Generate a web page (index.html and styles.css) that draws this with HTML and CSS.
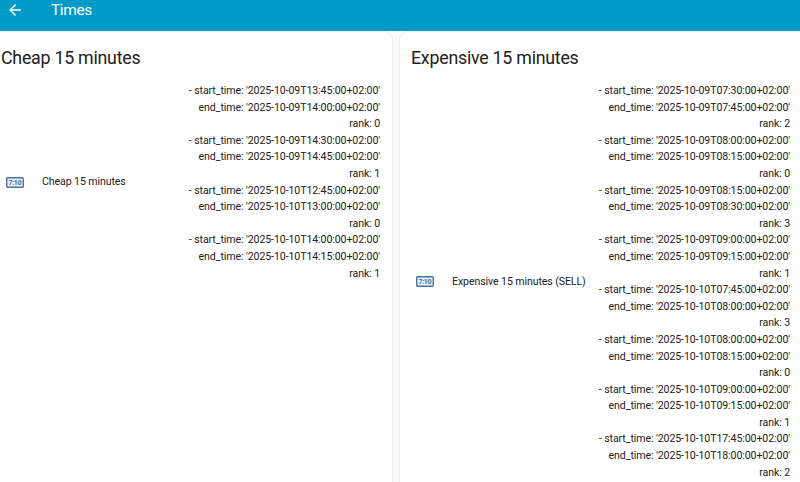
FILE: index.html
```html
<!DOCTYPE html>
<html lang="en">
<head>
  <meta charset="UTF-8" />
  <meta name="viewport" content="width=device-width, initial-scale=1.0" />
  <title>Times</title>
  <link rel="stylesheet" href="styles.css">
</head>
<body>
  <header>
    <svg class="back" viewBox="0 0 24 24"><path d="M20,11.1V12.9H7.8L13.4,18.5L12.08,19.92L4.16,12L12.08,4.08L13.4,5.5L7.8,11.1H20Z" /></svg>
    <h1>Times</h1>
  </header>
  <main>
    <section class="card">
      <h2>Cheap 15 minutes</h2>
      <div class="row">
        <svg class="counter" viewBox="0 0 18 11">
          <rect x="0.75" y="0.75" width="16.5" height="9.5" rx="1" />
          <text x="9" y="8.1" textLength="13">7:10</text>
        </svg>
        <div class="name">Cheap 15 minutes</div>
        <ul class="times" id="cheap"></ul>
      </div>
    </section>

    <section class="card">
      <h2>Expensive 15 minutes</h2>
      <div class="row">
        <svg class="counter" viewBox="0 0 18 11">
          <rect x="0.75" y="0.75" width="16.5" height="9.5" rx="1" />
          <text x="9" y="8.1" textLength="13">7:10</text>
        </svg>
        <div class="name">Expensive 15 minutes (SELL)</div>
        <ul class="times" id="expensive"></ul>
      </div>
    </section>
  </main>

  <script>
    const times = {
      cheap: [
        { start: '2025-10-09T13:45', end: '2025-10-09T14:00', rank: 0 },
        { start: '2025-10-09T14:30', end: '2025-10-09T14:45', rank: 1 },
        { start: '2025-10-10T12:45', end: '2025-10-10T13:00', rank: 0 },
        { start: '2025-10-10T14:00', end: '2025-10-10T14:15', rank: 1 }
      ],
      expensive: [
        { start: '2025-10-09T07:30', end: '2025-10-09T07:45', rank: 2 },
        { start: '2025-10-09T08:00', end: '2025-10-09T08:15', rank: 0 },
        { start: '2025-10-09T08:15', end: '2025-10-09T08:30', rank: 3 },
        { start: '2025-10-09T09:00', end: '2025-10-09T09:15', rank: 1 },
        { start: '2025-10-10T07:45', end: '2025-10-10T08:00', rank: 3 },
        { start: '2025-10-10T08:00', end: '2025-10-10T08:15', rank: 0 },
        { start: '2025-10-10T09:00', end: '2025-10-10T09:15', rank: 1 },
        { start: '2025-10-10T17:45', end: '2025-10-10T18:00', rank: 2 }
      ]
    };

    for (const id in times) {
      const list = document.getElementById(id);
      for (const t of times[id]) {
        const li = document.createElement('li');
        li.innerHTML = `
          <div>- start_time: '${t.start}:00+02:00'</div>
          <div>end_time: '${t.end}:00+02:00'</div>
          <div>rank: ${t.rank}</div>
        `;
        list.appendChild(li);
      }
    }
  </script>
</body>
</html>
```
FILE: styles.css
```css
* { box-sizing: border-box; }
body { margin: 0; height: 482px; overflow: hidden; font-family: Roboto, sans-serif; font-size: 10.6px; letter-spacing: -0.1px; background: #fafafa; color: #212121; }
header { display: flex; align-items: center; height: 31px; padding: 0 0 11px 6px; background: #009ac7; color: white; }
h1 { margin: 0 0 0 27px; font-size: 15.5px; font-weight: 400; line-height: 20px; letter-spacing: -0.4px; }
h2 { margin: 0; font-size: 17.8px; font-weight: 400; line-height: 24px; letter-spacing: -0.24px; }
ul { list-style: none; margin: 0; padding: 0; }
main { display: grid; grid-template-columns: 393px 401px; gap: 6px; }
.back { width: 18px; height: 18px; fill: white; }
.card { height: 460px; padding: 14px 12px 0 1px; background: white; border: 1px solid #ececec; border-radius: 9px 9px 0 0; }
.card:first-child { border-left: none; border-top-left-radius: 0; }
.card:last-child { border-right: none; border-top-right-radius: 0; padding: 14px 10px 0 11px; }
.row { display: flex; align-items: center; margin-top: 13px; }
.counter { width: 18px; height: 11px; margin: 0 0 1px 5px; flex: none; }
.counter rect { fill: #e8f0f6; stroke: #44739e; stroke-width: 1.4; }
.counter text { fill: #44739e; font-size: 7px; font-weight: 700; text-anchor: middle; letter-spacing: 0; }
.name { flex: 1; margin: 0 0 2px 18px; white-space: nowrap; }
.times { text-align: right; white-space: nowrap; line-height: 16.59px; }
```
